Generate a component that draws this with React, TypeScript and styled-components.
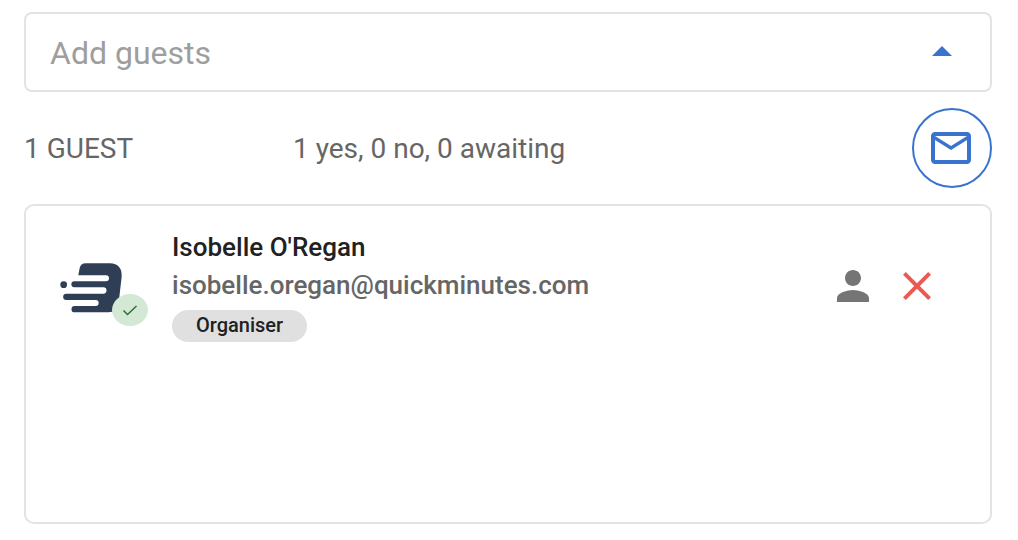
import React from "react";
import styled, { createGlobalStyle } from "styled-components";

const GlobalStyle = createGlobalStyle`
  * { box-sizing: border-box; }
  body {
    margin: 0;
    background: #fff;
    font-family: Roboto, "Liberation Sans", sans-serif;
    color: #212121;
  }
  button { font: inherit; cursor: pointer; }
`;

const Panel = styled.main`
  display: flex;
  flex-direction: column;
  gap: 16px;
  padding: 12px 26px 16px 24px;
`;

const GuestField = styled.div`
  display: flex;
  align-items: center;
  height: 80px;
  padding: 0 24px;
  border: 2px solid #e3e3e3;
  border-radius: 8px;
`;

const GuestInput = styled.input`
  flex: 1;
  min-width: 0;
  height: 48px;
  padding: 2px 0 0;
  border: 0;
  outline: 0;
  background: transparent;
  font: 400 32px/40px Roboto, "Liberation Sans", sans-serif;
  color: #212121;
  &::placeholder { color: #9e9e9e; opacity: 1; }
`;

const IconButton = styled.button<{ $color: string }>`
  display: flex;
  flex: none;
  padding: 0;
  border: 0;
  background: transparent;
  color: ${(p) => p.$color};
`;

const Icon = styled.svg`
  display: block;
  width: 48px;
  height: 48px;
  fill: currentColor;
`;

const Summary = styled.div`
  display: flex;
  align-items: center;
  font-size: 28px;
  line-height: 32px;
  color: #666;
`;

const Count = styled.div`
  flex: 0 0 269px;
  padding-top: 2px;
`;

const Replies = styled.div`
  flex: 1;
  padding-top: 2px;
`;

const MailButton = styled.button`
  display: flex;
  align-items: center;
  justify-content: center;
  width: 80px;
  height: 80px;
  padding: 0 2px 0 0;
  border: 2px solid #3973cd;
  border-radius: 50%;
  background: #fff;
  color: #3973cd;
`;

const GuestList = styled.ul`
  min-height: 320px;
  margin: 0;
  padding: 22px 49px 22px 34px;
  border: 2px solid #e3e3e3;
  border-radius: 10px;
  list-style: none;
`;

const Guest = styled.li`
  display: flex;
  align-items: center;
`;

const Avatar = styled.div`
  position: relative;
  flex: none;
  width: 64px;
  height: 64px;
  margin: 6px 48px 0 0;
`;

const Logo = styled.svg`
  display: block;
  width: 64px;
  height: 64px;
`;

const Accepted = styled.span`
  position: absolute;
  right: -24px;
  bottom: -6px;
  display: flex;
  align-items: center;
  justify-content: center;
  width: 36px;
  height: 32px;
  border-radius: 50%;
  background: #d3e9d5;
`;

const Tick = styled.svg`
  width: 16px;
  height: 16px;
  fill: none;
  stroke: #2e7034;
  stroke-width: 1.5;
`;

const Details = styled.div`
  flex: 1;
  min-width: 0;
  font-size: 26px;
  font-weight: 500;
  line-height: 38px;
`;

const Name = styled.div`
  color: #212121;
`;

const Email = styled.div`
  color: #666;
`;

const Role = styled.span`
  display: block;
  width: fit-content;
  height: 32px;
  margin-top: 6px;
  padding: 0 24px;
  border-radius: 16px;
  background: #e0e0e0;
  font-size: 20px;
  line-height: 30px;
`;

const Actions = styled.div`
  display: flex;
  gap: 16px;
  padding-top: 2px;
`;

export default function App() {
  return (
    <>
      <GlobalStyle />
      <Panel>
        <GuestField>
          <GuestInput type="text" placeholder="Add guests" aria-label="Add guests" />
          <IconButton type="button" $color="#3973cd" aria-label="Close guest options">
            <Icon viewBox="0 0 24 24"><path d="M7 14l5-5 5 5z" /></Icon>
          </IconButton>
        </GuestField>
        <Summary>
          <Count>1 GUEST</Count>
          <Replies>1 yes, 0 no, 0 awaiting</Replies>
          <MailButton type="button" aria-label="Email guests">
            <Icon viewBox="0 0 24 24">
              <path d="M22 6c0-1.1-.9-2-2-2H4c-1.1 0-2 .9-2 2v12c0 1.1.9 2 2 2h16c1.1 0 2-.9 2-2V6zm-2 0l-8 5-8-5h16zm0 12H4V8l8 5 8-5v10z" />
            </Icon>
          </MailButton>
        </Summary>
        <GuestList>
          <Guest>
            <Avatar>
              <Logo viewBox="30 18 192 192" fill="#2f3e55" aria-hidden="true">
                <circle cx="41" cy="104" r="10" />
                <path d="M85 76L89 54Q92 40 107 40H180C204 40 217 56 215 80L206 158Q202 187 175 187H74A9 9 0 0 1 74 168H137A9 9 0 0 0 137 150H49A9.500 9.500 0 0 1 49 131H160A9 9 0 0 0 160 112H73A9 9 0 0 1 73 94H168A9 9 0 0 0 168 76Z" />
              </Logo>
              <Accepted role="img" aria-label="Accepted">
                <Tick viewBox="0 0 16 16"><path d="M1.500 8.500l4 4L14.500 4" /></Tick>
              </Accepted>
            </Avatar>
            <Details>
              <Name>Isobelle O'Regan</Name>
              <Email>isobelle.oregan@quickminutes.com</Email>
              <Role>Organiser</Role>
            </Details>
            <Actions>
              <IconButton type="button" $color="#757575" aria-label="Guest role">
                <Icon viewBox="0 0 24 24">
                  <path d="M12 12c2.210 0 4-1.790 4-4s-1.790-4-4-4-4 1.790-4 4 1.790 4 4 4zm0 2c-2.670 0-8 1.340-8 4v2h16v-2c0-2.660-5.330-4-8-4z" />
                </Icon>
              </IconButton>
              <IconButton type="button" $color="#eb5a52" aria-label="Remove guest">
                <Icon viewBox="0 0 24 24">
                  <path d="M19 6.410L17.590 5 12 10.590 6.410 5 5 6.410 10.590 12 5 17.590 6.410 19 12 13.410 17.590 19 19 17.590 13.410 12z" />
                </Icon>
              </IconButton>
            </Actions>
          </Guest>
        </GuestList>
      </Panel>
    </>
  );
}
